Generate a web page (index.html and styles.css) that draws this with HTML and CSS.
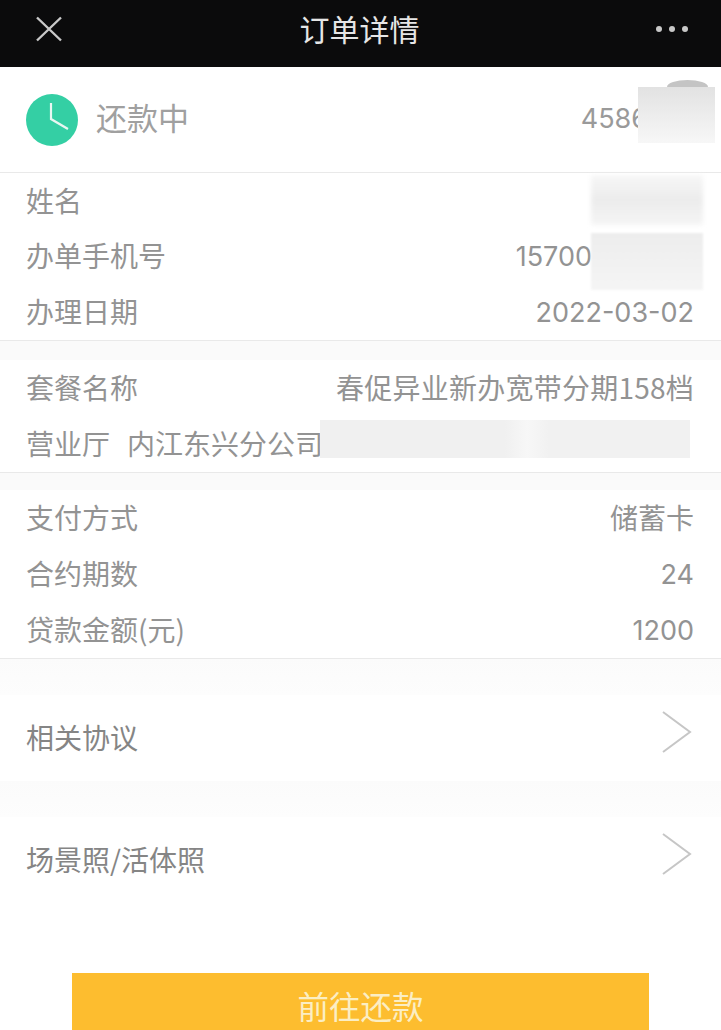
FILE: index.html
```html
<!DOCTYPE html>
<html lang="zh-CN">
<head>
<meta charset="utf-8">
<title>订单详情</title>
<link rel="stylesheet" href="styles.css">
</head>
<body>
<div class="page">
  <header class="topbar">
    <svg class="close" width="28" height="26" viewBox="0 0 28 26"><path d="M2 1.500L26 24.500M26 1.500L2 24.500" fill="none" stroke="#c9c9c9" stroke-width="2.400"/></svg>
    <h1 class="title">订单详情</h1>
    <div class="dots"><i></i><i></i><i></i></div>
  </header>

  <section class="status">
    <svg class="clock" width="52" height="52" viewBox="0 0 52 52"><circle cx="26" cy="26" r="26" fill="#34cfa4"/><path d="M25 9V25L42 35" fill="none" stroke="#e9f7f2" stroke-width="2.200"/></svg>
    <span class="status-text">还款中</span>
    <span class="num order-no">4586</span>
  </section>

  <section class="group">
    <div class="row"><span>姓名</span></div>
    <div class="row"><span>办单手机号</span><span class="num phone">15700</span></div>
    <div class="row"><span>办理日期</span><span class="num">2022-03-02</span></div>
  </section>
  <div class="band"></div>

  <section class="group">
    <div class="row"><span>套餐名称</span><span class="val-wide">春促异业新办宽带分期158档</span></div>
    <div class="row"><span class="store-label">营业厅</span><span class="store">内江东兴分公司</span></div>
  </section>
  <div class="band band-b"></div>

  <section class="group">
    <div class="row"><span>支付方式</span><span>储蓄卡</span></div>
    <div class="row"><span>合约期数</span><span class="num">24</span></div>
    <div class="row"><span>贷款金额(元)</span><span class="num">1200</span></div>
  </section>

  <div class="spacer"></div>
  <div class="link-row"><span>相关协议</span>
    <svg class="chev" width="30" height="42" viewBox="0 0 30 42"><path d="M1 1L28 21L1 41" fill="none" stroke="#c6c6c6" stroke-width="2"/></svg>
  </div>
  <div class="spacer"></div>
  <div class="link-row"><span>场景照/活体照</span>
    <svg class="chev" width="30" height="42" viewBox="0 0 30 42"><path d="M1 1L28 21L1 41" fill="none" stroke="#c6c6c6" stroke-width="2"/></svg>
  </div>

  <button class="pay">前往还款</button>

  <div class="blur blur-arc"></div>
  <div class="blur blur-order"></div>
  <div class="blur blur-name"></div>
  <div class="blur blur-phone"></div>
  <div class="blur blur-store"></div>
</div>
</body>
</html>
```

FILE: styles.css
```css
* { box-sizing: border-box; }
html, body { margin: 0; padding: 0; height: 100%; overflow: hidden; background: #fff; }
.page {
  position: relative;
  width: 721px;
  height: 1030px;
  overflow: hidden;
  background: #fff;
  color: #939393;
  font-family: "Noto Sans CJK SC", "Noto Sans", sans-serif;
  font-size: 28px;
  font-weight: 400;
}
.topbar {
  height: 67px;
  background: #0b0b0c;
  display: flex;
  align-items: center;
  justify-content: space-between;
  padding: 0 33px 9px 35px;
}
.title {
  margin: 0 0 3px;
  font-size: 30px;
  font-weight: 400;
  color: #e6e6e6;
  line-height: 1;
}
.dots { display: flex; gap: 7px; }
.dots i { width: 6px; height: 6px; border-radius: 50%; background: #c8c8c8; }
.status {
  height: 106px;
  display: flex;
  align-items: center;
  padding: 0 0 0 26px;
  border-bottom: 1px solid #e9e9e9;
}
.clock { flex: none; }
.status-text { margin: 0 0 7px 18px; font-size: 31px; color: #a0a0a0; line-height: 1; }
.num { margin-top: 3px; font-family: Inter, "Noto Sans CJK SC", sans-serif; font-size: 27px; }
.order-no { margin: 0 0 3px auto; padding-right: 73px; color: #9a9a9a; }
.val-wide { letter-spacing: .25px; }
.group { border-bottom: 1px solid #e9e9e9; }
.row {
  height: 56px;
  display: flex;
  align-items: center;
  justify-content: space-between;
  padding: 0 27px 2px 26px;
  line-height: 1;
}
.group:nth-of-type(2) .row:first-child { height: 55px; }
.phone { padding-right: 102px; }
.store-label { margin-right: 17px; }
.store { margin-right: auto; }
.band {
  height: 19px;
  background: #fafafa;
}
.band-b { height: 17px; }
.spacer { height: 36px; background: linear-gradient(#fbfbfb, #fdfdfd); }
.link-row {
  height: 86px;
  display: flex;
  align-items: center;
  justify-content: space-between;
  padding: 0 29px 2px 26px;
  color: #858585;
  line-height: 1;
}
.chev { flex: none; margin-bottom: 10px; }
.pay {
  display: block;
  width: 577px;
  height: 70px;
  margin: 70px 0 0 72px;
  padding: 0 0 4px;
  border: 0;
  background: #fdbd2f;
  color: #fbeec4;
  font-family: inherit;
  font-size: 31.500px;
  font-weight: 400;
  line-height: 1;
}
.blur { position: absolute; background: #f1f1f1; }
.blur-arc { left: 667px; top: 80px; width: 41px; height: 14px; border-radius: 50% 50% 0 0; background: #c4c4c4; }
.blur-order { left: 638px; top: 87px; width: 77px; height: 56px; background: linear-gradient(#e2e2e2, #f7f7f7); }
.blur-name { left: 591px; top: 175px; width: 112px; height: 50px; background: linear-gradient(#f7f7f7, #ececec 50%, #f5f5f5); filter: blur(2px); }
.blur-phone { left: 591px; top: 233px; width: 112px; height: 57px; background: linear-gradient(#ededed, #f5f5f5); filter: blur(1px); }
.blur-store { left: 320px; top: 420px; width: 370px; height: 38px; background: linear-gradient(90deg, #f0f0f0 50%, #f7f7f7 56%, #f1f1f1 62%); }
```
